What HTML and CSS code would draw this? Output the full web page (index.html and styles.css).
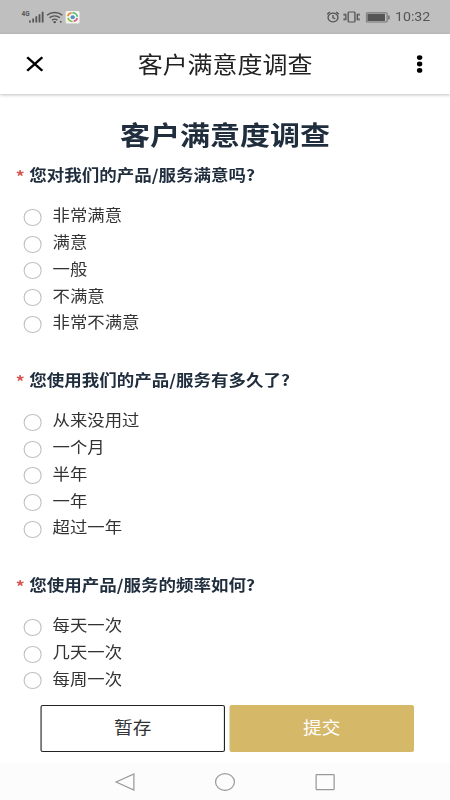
FILE: index.html
```html
<!DOCTYPE html>
<html lang="zh-CN">
<head>
<meta charset="utf-8">
<title>客户满意度调查</title>
<link rel="stylesheet" href="styles.css">
</head>
<body>
<div class="screen">
  <div class="status">
    <svg class="status-left" viewBox="0 0 60 14">
      <text class="net" x="0.2" y="5.8" textLength="7.2" lengthAdjust="spacingAndGlyphs">4G</text>
      <path class="bars" d="M7.6 12.6v-2.2M10.5 12.6V8.5M13.3 12.6V6.3M16.1 12.6V4.2M18.9 12.6V1.8"/>
      <g class="wave"><path d="M22.8 5.2a10 10 0 0 1 13.6 0M25 7.7a6.8 6.8 0 0 1 9.2 0M27.2 10.2a3.6 3.6 0 0 1 4.8 0"/></g>
      <circle class="dot" cx="29.6" cy="12.1" r="1.2"/>
      <circle class="dot" cx="35" cy="11.8" r=".9"/>
      <rect class="app" x="39.3" y="1" width="12.4" height="12.4" rx="1.5"/>
      <g class="ring">
        <path stroke="#e78a3b" d="M41.3 6.2a4.3 4.3 0 0 1 3.4-3.4"/>
        <path stroke="#44b86b" d="M45.4 2.8a4.4 4.4 0 0 1 4.4 4"/>
        <path stroke="#d95b91" d="M49.7 8a4.3 4.3 0 0 1-3.2 3.3"/>
        <path stroke="#81bd3e" d="M45.5 11.5a4.3 4.3 0 0 1-4-3.6"/>
      </g>
      <circle cx="45.6" cy="7.2" r="1.9" fill="#4594bd"/>
    </svg>
    <div class="status-right">
      <svg class="alarm" viewBox="0 0 12 12"><circle cx="6" cy="6.5" r="4.4"/><path d="M6 4v2.8l2 1M.8 3.2 3.2 1M11.2 3.2 8.8 1"/></svg>
      <svg class="vibrate" viewBox="0 0 15 12"><rect x="4.5" y="1" width="6" height="10" rx=".8"/><path d="M2.4 2.8v6.4M12.6 2.8v6.4M.9 2.4v2.4M.9 7.2v2.4M14.1 2.4v2.4M14.1 7.2v2.4"/></svg>
      <svg class="battery" viewBox="0 0 22 11"><rect class="case" x=".5" y=".7" width="18.6" height="9.4" rx="1"/><rect class="charge" x="1.6" y="1.8" width="15.6" height="7.2"/><path d="M20.7 3.4v4"/></svg>
      <span class="time">10:32</span>
    </div>
  </div>
  <header class="topbar">
    <svg class="close" viewBox="0 0 16 16"><path d="M1.2 1.2 14.8 14.8M14.8 1.2 1.2 14.8"/></svg>
    <div class="page-name">客户满意度调查</div>
    <svg class="more" viewBox="0 0 6 18"><circle cx="3" cy="2.6" r="2.4"/><circle cx="3" cy="9" r="2.4"/><circle cx="3" cy="15.4" r="2.4"/></svg>
  </header>
  <main class="survey">
    <h1>客户满意度调查</h1>
    <section class="question">
      <h2><span class="required">*</span>您对我们的产品/服务满意吗?</h2>
      <ul>
        <li><i class="radio"></i><span>非常满意</span></li>
        <li><i class="radio"></i><span>满意</span></li>
        <li><i class="radio"></i><span>一般</span></li>
        <li><i class="radio"></i><span>不满意</span></li>
        <li><i class="radio"></i><span>非常不满意</span></li>
      </ul>
    </section>
    <section class="question">
      <h2><span class="required">*</span>您使用我们的产品/服务有多久了?</h2>
      <ul>
        <li><i class="radio"></i><span>从来没用过</span></li>
        <li><i class="radio"></i><span>一个月</span></li>
        <li><i class="radio"></i><span>半年</span></li>
        <li><i class="radio"></i><span>一年</span></li>
        <li><i class="radio"></i><span>超过一年</span></li>
      </ul>
    </section>
    <section class="question">
      <h2><span class="required">*</span>您使用产品/服务的频率如何?</h2>
      <ul>
        <li><i class="radio"></i><span>每天一次</span></li>
        <li><i class="radio"></i><span>几天一次</span></li>
        <li><i class="radio"></i><span>每周一次</span></li>
      </ul>
    </section>
  </main>
  <div class="actions">
    <button class="save">暂存</button>
    <button class="submit">提交</button>
  </div>
  <nav class="keys">
    <svg viewBox="0 0 20 20"><path d="M18 2v16L2.2 10z"/></svg>
    <svg viewBox="0 0 20 20"><circle cx="10" cy="10" r="8.4"/></svg>
    <svg viewBox="0 0 20 20"><rect x="2" y="2.6" width="16" height="15" rx=".5"/></svg>
  </nav>
</div>
</body>
</html>
```

FILE: styles.css
```css
* { box-sizing: border-box; }

body {
  margin: 0;
  overflow: hidden;
  background: #fff;
  font-family: "Noto Sans CJK SC", sans-serif;
}

.screen {
  display: flex;
  flex-direction: column;
  width: 400px;
  height: 800px;
  transform: scaleX(1.125);
  transform-origin: 0 0;
}

svg { display: block; flex: none; fill: none; }

.status {
  flex: none;
  display: flex;
  align-items: center;
  justify-content: space-between;
  height: 34px;
  padding: 0 17.5px 0 19.3px;
  background: #bfbfbf;
}
.status-left { width: 60px; height: 14px; }
.net { font: bold 6.4px Roboto, sans-serif; fill: #555; }
.bars { stroke: #555; stroke-width: 1.6; }
.wave { stroke: #555; stroke-width: 1.4; }
.dot { fill: #555; }
.app { fill: #f4f4ee; }
.ring { stroke-width: 1.4; }
.status-right {
  display: flex;
  align-items: center;
  stroke: #555;
}
.alarm { width: 12px; height: 12px; margin-right: 3px; stroke-width: 1.2; }
.vibrate { width: 15px; height: 12px; margin-right: 5px; stroke-width: 1.2; }
.battery { width: 22px; height: 11px; margin-right: 4px; }
.case { stroke: #777; }
.charge { fill: #555; stroke: none; }
.time {
  color: #555;
  font: 12.6px/16px Roboto, sans-serif;
  stroke: none;
}

.topbar {
  position: relative;
  flex: none;
  display: flex;
  align-items: center;
  height: 60px;
  padding: 0 24px 0 23.3px;
  background: #fff;
  box-shadow: 0 1px 3px rgba(0, 0, 0, .25);
}
.close { width: 15.8px; height: 16px; stroke: #000; stroke-width: 2.3; }
.more { width: 6px; height: 18px; margin-left: auto; fill: #000; }
.page-name {
  margin-left: 83.3px;
  padding-bottom: 2px;
  font-size: 22.2px;
  line-height: 30px;
  color: #222;
}

.survey {
  flex: 1;
  min-height: 0;
  overflow: hidden;
}
h1 {
  margin: 20px 0 0;
  font-size: 26.7px;
  font-weight: 700;
  line-height: 40px;
  text-align: center;
  color: #1f2d3d;
}
.question { height: 205px; padding: 10px 0 0 14px; }
h2 {
  display: flex;
  margin: 0 0 18px;
  font-size: 15.55px;
  font-weight: 700;
  line-height: 20px;
  color: #1f2d3d;
}
.required { width: 12px; padding-top: 2px; margin-bottom: -2px; color: #d9534f; }
ul { margin: 0; padding: 0 0 0 6.6px; list-style: none; }
li {
  display: flex;
  align-items: center;
  gap: 9.3px;
  height: 26.75px;
  padding-bottom: 2px;
  font-size: 15.45px;
  line-height: 22px;
  color: #333;
}
.radio {
  flex: none;
  width: 16.8px;
  height: 16.8px;
  margin-top: 6px;
  border: 1px solid #c0c0c0;
  border-radius: 50%;
}

.actions {
  flex: none;
  display: flex;
  gap: 4px;
  height: 63px;
  padding: 5px 32px 11px 36px;
  background: #fff;
}
button {
  flex: 1;
  padding: 0 0 4px;
  border: 1.5px solid #222;
  border-radius: 2px;
  background: #fff;
  font: 16.6px/24px "Noto Sans CJK SC", sans-serif;
  color: #333;
}
.submit { border-color: #d6b869; background: #d6b869; color: #fff; }

.keys {
  flex: none;
  display: flex;
  align-items: center;
  justify-content: center;
  gap: 69px;
  height: 37px;
  background: #fcfcfc;
  stroke: #999;
}
.keys svg { width: 20px; height: 20px; stroke-width: 1.1; }
```
